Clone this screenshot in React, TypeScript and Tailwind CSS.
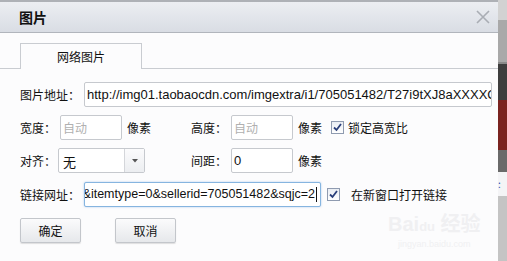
import React from "react";

const cjk = { fontFamily: '"Microsoft YaHei", "Noto Sans CJK SC", sans-serif' };
const latin = { fontFamily: '"Liberation Sans", "Noto Sans CJK SC", sans-serif' };

function Check() {
  return (
    <span className="shrink-0 inline-flex w-[13px] h-[13px] items-center justify-center border border-[#8f9bb0] bg-gradient-to-b from-[#e9edf3] to-[#ffffff]">
      <svg width="9" height="9" viewBox="0 0 9 9">
        <path d="M1 4.5 L3.5 7 L8 1" fill="none" stroke="#2a3f7a" strokeWidth="1.8" />
      </svg>
    </span>
  );
}

function Box({ w, children, gray }: { w: string; children?: React.ReactNode; gray?: boolean }) {
  return (
    <div
      className={`${w} shrink-0 h-[25px] border border-[#c6c9ce] rounded-[2px] bg-white flex items-center px-[2px] overflow-hidden whitespace-nowrap ${gray ? "text-[12px] text-[#b0b0b0]" : "text-[13px] text-[#111]"}`}
      style={gray ? cjk : latin}
    >
      {children}
    </div>
  );
}

function Btn({ label }: { label: string }) {
  return (
    <div className="shrink-0 w-[61px] h-[25px] border border-[#c3c6cb] rounded-[2px] bg-gradient-to-b from-[#fbfbfc] to-[#e6e8eb] shadow-[0_1px_1px_rgba(0,0,0,0.12)] flex items-center justify-center text-[12px] text-[#111]">
      {label}
    </div>
  );
}

function Label({ w, children }: { w: string; children: React.ReactNode }) {
  return <span className={`${w} shrink-0 whitespace-nowrap`}>{children}</span>;
}

export default function App() {
  return (
    <div className="w-[507px] h-[261px] flex overflow-hidden bg-white" style={cjk}>
      <div className="w-[498px] shrink-0 flex flex-col relative bg-[#fcfcfd]">
        {/* title bar */}
        <div className="h-[2px] bg-[#aeb1b6]" />
        <div className="h-[31px] bg-gradient-to-b from-[#eceef2] to-[#d9dde4] border-b border-[#b1b5bc] flex items-center justify-between pl-[19px] pr-[8px]">
          <span className="text-[14px] font-bold text-[#111]">图片</span>
          <svg width="14" height="14" viewBox="0 0 14 14">
            <path d="M1 1 L13 13 M13 1 L1 13" stroke="#a9adb4" strokeWidth="1.6" />
          </svg>
        </div>

        {/* tab strip */}
        <div className="mt-[10px] border-b border-[#c9ccd1] flex pl-[20px]">
          <div className="w-[122px] h-[26px] -mb-px border border-b-0 border-[#c9ccd1] bg-[#fcfcfd] flex items-center justify-center text-[12px] text-[#111]">
            网络图片
          </div>
        </div>

        {/* form */}
        <div className="pl-[20px] flex flex-col text-[12px] text-[#111]">
          <div className="mt-[13px] h-[25px] flex items-center">
            <Label w="w-[64px]">图片地址：</Label>
            <Box w="w-[408px]">http://img01.taobaocdn.com/imgextra/i1/705051482/T27i9tXJ8aXXXXC</Box>
          </div>

          <div className="mt-[8px] h-[25px] flex items-center">
            <Label w="w-[40px]">宽度：</Label>
            <Box w="w-[62px]" gray>自动</Box>
            <Label w="ml-[5px] w-[64px]">像素</Label>
            <Label w="w-[40px]">高度：</Label>
            <Box w="w-[62px]" gray>自动</Box>
            <Label w="ml-[5px] w-[33px]">像素</Label>
            <Check />
            <Label w="ml-[4px]">锁定高宽比</Label>
          </div>

          <div className="mt-[8px] h-[25px] flex items-center">
            <Label w="w-[38px]">对齐：</Label>
            <div className="shrink-0 w-[87px] h-[25px] border border-[#c6c9ce] rounded-[2px] bg-white flex">
              <span className="flex-1 flex items-center pl-[4px] pt-[2px] text-[13px]">无</span>
              <span className="w-[20px] border-l border-[#d4d6da] bg-gradient-to-b from-[#fbfbfc] to-[#eceef1] flex items-center justify-center">
                <svg width="6" height="4" viewBox="0 0 6 4">
                  <path d="M0 0 H6 L3 3.5 Z" fill="#555" />
                </svg>
              </span>
            </div>
            <Label w="ml-[46px] w-[40px]">间距：</Label>
            <Box w="w-[62px]">0</Box>
            <Label w="ml-[5px]">像素</Label>
          </div>

          <div className="mt-[9px] h-[25px] flex items-center">
            <Label w="w-[64px]">链接网址：</Label>
            <div
              className="shrink-0 w-[237px] h-[25px] border border-[#86b5e0] rounded-[2px] bg-white flex items-center justify-end pr-[3px] text-[12.5px] overflow-hidden whitespace-nowrap shadow-[0_0_2px_rgba(90,150,220,0.5)]"
              style={latin}
            >
              <span>&amp;itemtype=0&amp;sellerid=705051482&amp;sqjc=2</span>
              <span className="shrink-0 w-px h-[15px] bg-[#111] ml-px" />
            </div>
            <span className="ml-[6px] flex">
              <Check />
            </span>
            <Label w="ml-[11px]">在新窗口打开链接</Label>
          </div>

          <div className="mt-[11px] flex items-center gap-[34px]">
            <Btn label="确定" />
            <Btn label="取消" />
          </div>
        </div>

        {/* watermark */}
        <div className="absolute left-[388px] top-[212px] flex flex-col items-center text-[#f0f0f2] pointer-events-none" style={latin}>
          <span className="text-[20px] font-bold leading-[22px] whitespace-nowrap">Bai<span className="text-[13px]">du</span> <span style={cjk}>经验</span></span>
          <span className="text-[9px] leading-[12px]">jingyan.baidu.com</span>
        </div>
      </div>

      {/* background strip on the right */}
      <div className="w-[9px] flex flex-col">
        <div className="h-[20px] bg-[#d2d2d2]" />
        <div className="h-[42px] bg-[#a9a9a9]" />
        <div className="h-[2px] bg-[#8a8a8a]" />
        <div className="h-[36px] bg-[#3e3e3e]" />
        <div className="h-[50px] bg-[#7a2320]" />
        <div className="h-[22px] bg-[#6a6a6a]" />
        <div className="h-[24px] bg-[#f4f4f6] text-[10px] text-[#2b4fb0] leading-[24px]">:</div>
        <div className="flex-1 bg-[#c4c4c4]" />
      </div>
    </div>
  );
}
